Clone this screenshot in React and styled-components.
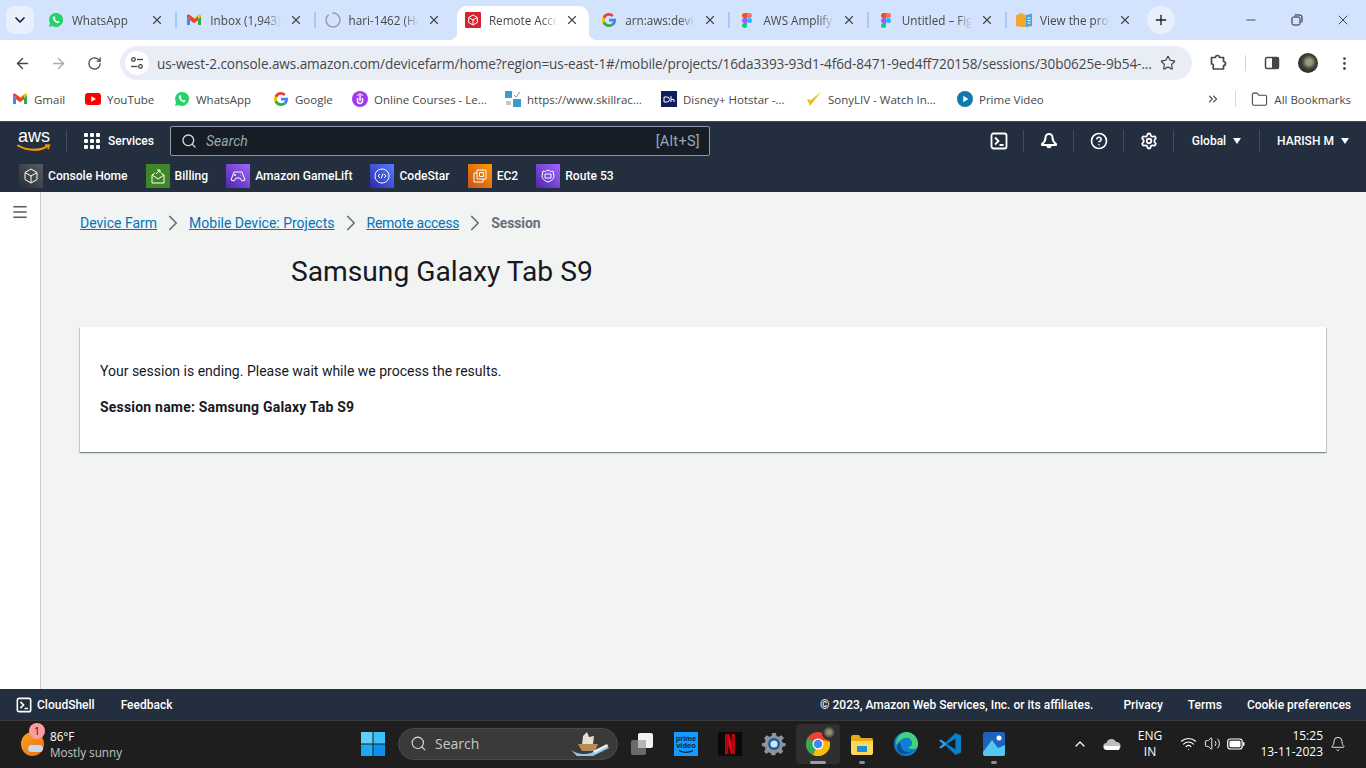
import styled, { createGlobalStyle } from "styled-components";
import {
  Search as SearchIcon,
  X,
  Plus,
  ArrowLeft,
  ArrowRight,
  RotateCw,
  Star,
  Minus,
  ChevronDown,
  ChevronUp,
  ChevronsRight,
  Folder,
  MoreVertical,
  Bell,
  CircleHelp,
  Settings,
  Menu,
  ChevronRight,
  Wifi,
  Volume2,
} from "lucide-react";

const GlobalStyle = createGlobalStyle`
  html, body { margin: 0; padding: 0; background: #fff; }
  body { font-family: "Open Sans", "Noto Sans", sans-serif; overflow: hidden; }
  * { box-sizing: border-box; }
`;

const Page = styled.div`
  width: 1366px;
  height: 768px;
  display: flex;
  flex-direction: column;
  overflow: hidden;
`;

/* ---------- chrome tabs ---------- */
const TabStrip = styled.div`
  height: 40px;
  flex: none;
  background: #d3e3fd;
  display: flex;
  align-items: flex-start;
  padding: 6px 0 0 6px;
`;
const TabMenu = styled.div`
  width: 28px;
  height: 28px;
  margin-right: 4px;
  border-radius: 8px;
  background: #e8f0fe;
  display: flex;
  align-items: center;
  justify-content: center;
  color: #1f1f1f;
`;
const Tab = styled.div`
  position: relative;
  width: ${(p) => (p.$active ? "132.3px" : "138.3px")};
  margin: ${(p) => (p.$active ? "0 2px 0 4px" : "0")};
  height: 34px;
  display: flex;
  align-items: center;
  padding: ${(p) => (p.$active ? "0 10px 6px 8px" : "0 12px 6px 10px")};
  gap: 8px;
  font-size: 11.7px;
  color: #474747;
  border-radius: 10px 10px 0 0;
  background: ${(p) => (p.$active ? "#fff" : "transparent")};
  &::before {
    content: "";
    display: ${(p) => (p.$sep ? "block" : "none")};
    position: absolute;
    left: -1px;
    top: 6px;
    width: 2px;
    height: 16px;
    background: #a8c7fa;
  }
`;
/* small flares where the active tab runs into the toolbar */
const TabFlare = styled.span`
  position: absolute;
  bottom: 0;
  width: 8px;
  height: 8px;
  ${(p) => (p.$right ? "right: -8px;" : "left: -8px;")}
  background: radial-gradient(
    circle at ${(p) => (p.$right ? "100% 0" : "0 0")},
    transparent 8px,
    #fff 8.5px
  );
`;
const TabIcon = styled.div`
  width: 16px;
  height: 16px;
  flex: none;
  display: flex;
`;
const TabTitle = styled.div`
  flex: 1;
  white-space: nowrap;
  overflow: hidden;
  -webkit-mask-image: linear-gradient(90deg, #000 78%, transparent 100%);
  mask-image: linear-gradient(90deg, #000 78%, transparent 100%);
`;
const NewTab = styled.div`
  width: 28px;
  height: 28px;
  margin-left: 3px;
  border-radius: 50%;
  background: #e8f0fe;
  display: flex;
  align-items: center;
  justify-content: center;
  color: #1f1f1f;
`;
const WindowControls = styled.div`
  margin-left: auto;
  display: flex;
  margin-top: -6px;
`;
const WindowButton = styled.div`
  width: 46px;
  height: 40px;
  display: flex;
  align-items: center;
  justify-content: center;
  color: #1f1f1f;
`;

/* ---------- address bar ---------- */
const Toolbar = styled.div`
  height: 45px;
  flex: none;
  background: #fff;
  border-radius: 8px 8px 0 0;
  display: flex;
  align-items: center;
  padding: 1px 0 0 4px;
  color: #474747;
`;
const NavButton = styled.div`
  width: 36px;
  height: 34px;
  display: flex;
  align-items: center;
  justify-content: center;
  color: ${(p) => (p.$off ? "#a9abad" : "#474747")};
`;
const AddressBar = styled.div`
  width: 1072px;
  height: 34px;
  margin-left: 8px;
  border-radius: 17px;
  background: #e9eef6;
  display: flex;
  align-items: center;
  padding: 0 16px 0 5px;
`;
const SiteChip = styled.div`
  width: 24px;
  height: 24px;
  border-radius: 50%;
  background: #fff;
  display: flex;
  align-items: center;
  justify-content: center;
  margin-right: 8px;
`;
const Url = styled.div`
  flex: 1;
  font-size: 13.6px;
  color: #474747;
  letter-spacing: -0.1px;
  white-space: nowrap;
`;
const ToolRight = styled.div`
  display: flex;
  align-items: center;
  margin-left: 8px;
`;
const ToolSlot = styled.div`
  width: 36px;
  display: flex;
  align-items: center;
  justify-content: center;
`;
const ToolSep = styled.div`
  width: 1px;
  height: 16px;
  background: #c7d7f0;
  margin: 0 ${(p) => p.$m || 8}px;
`;
const Avatar = styled.div`
  width: 20px;
  height: 20px;
  border-radius: 50%;
  background: radial-gradient(circle at 55% 45%, #9b9a80 0 18%, #3c3f33 45%, #171d1c 100%);
`;

/* ---------- bookmarks ---------- */
const Bookmarks = styled.div`
  height: 36px;
  flex: none;
  background: #fff;
  display: flex;
  align-items: center;
  padding: 0 15px 8px 12px;
  font-size: 11.5px;
  color: #474747;
`;
const Bookmark = styled.div`
  display: flex;
  align-items: center;
  gap: 6px;
  width: ${(p) => (p.$w ? `${p.$w}px` : "auto")};
  white-space: nowrap;
`;
const BookmarkEnd = styled.div`
  margin-left: auto;
  display: flex;
  align-items: center;
`;

/* ---------- aws nav ---------- */
const AwsNav = styled.div`
  height: 71px;
  flex: none;
  background: #232f3e;
  color: #fff;
  border-top: 1px solid #414750;
  font-family: "Roboto", "Open Sans", sans-serif;
`;
const AwsTop = styled.div`
  height: 37px;
  display: flex;
  align-items: center;
  padding: 1px 0 0 17px;
`;
const AwsLogo = styled.div`
  width: 40px;
  height: 28px;
`;
const AwsDivider = styled.div`
  width: 1px;
  height: 22px;
  background: #414d5c;
  margin: ${(p) => p.$m || "0"};
`;
const ServicesBtn = styled.div`
  display: flex;
  align-items: center;
  gap: 8px;
  font-size: 12px;
  font-weight: 500;
  width: 86px;
`;
const GridDots = styled.div`
  width: 16px;
  height: 16px;
  display: grid;
  grid-template-columns: repeat(3, 4px);
  grid-auto-rows: 4px;
  gap: 2px;
  & > i {
    background: #fff;
    border-radius: 1px;
  }
`;
const AwsSearch = styled.div`
  width: 540px;
  height: 30px;
  background: #161d26;
  border: 1px solid #8d99a8;
  border-radius: 2px;
  display: flex;
  align-items: center;
  padding: 0 9px 0 10px;
  gap: 9px;
  font-size: 14px;
`;
const SearchHint = styled.span`
  font-style: italic;
  color: #9ba7b6;
  flex: 1;
`;
const SearchKey = styled.span`
  color: #9ba7b6;
  font-size: 14.5px;
  letter-spacing: 0.3px;
`;
const AwsRight = styled.div`
  margin-left: auto;
  display: flex;
  align-items: center;
  height: 100%;
`;
const AwsIconBtn = styled.div`
  width: 49px;
  display: flex;
  align-items: center;
  justify-content: center;
`;
const AwsMenu = styled.div`
  width: ${(p) => p.$w}px;
  display: flex;
  align-items: center;
  justify-content: center;
  gap: 7px;
  font-size: 12px;
  font-weight: 500;
  white-space: nowrap;
`;
const Caret = styled.span`
  width: 0;
  height: 0;
  border-left: 4.5px solid transparent;
  border-right: 4.5px solid transparent;
  border-top: 6px solid #fff;
`;
const Favs = styled.div`
  height: 33px;
  display: flex;
  align-items: center;
  padding-left: 19px;
  gap: 18px;
  font-size: 12.1px;
  font-weight: 500;
`;
const Fav = styled.div`
  display: flex;
  align-items: center;
  gap: 5px;
  white-space: nowrap;
`;
const FavIcon = styled.div`
  width: 24px;
  height: 24px;
  background: ${(p) => p.$bg};
  display: flex;
  align-items: center;
  justify-content: center;
`;

/* ---------- main ---------- */
const Body = styled.div`
  flex: 1;
  display: flex;
  min-height: 0;
  background: #f2f3f3;
  font-family: "Roboto", "Open Sans", sans-serif;
`;
const SideRail = styled.div`
  width: 41px;
  background: #fff;
  border-right: 1px solid #c8cccc;
  padding: 11px 0 0 11px;
  color: #545b64;
`;
const Content = styled.div`
  flex: 1;
  padding: 21px 40px 0 39px;
`;
const Crumbs = styled.div`
  display: flex;
  align-items: center;
  height: 20px;
  font-size: 14px;
`;
const CrumbLink = styled.a`
  color: #0073bb;
  text-decoration: underline;
  letter-spacing: ${(p) => p.$ls || 0}px;
`;
const CrumbCurrent = styled.span`
  color: #687078;
  font-weight: 700;
  letter-spacing: -0.1px;
`;
const CrumbSep = styled.div`
  width: 32px;
  display: flex;
  justify-content: center;
  color: #687078;
`;
const Title = styled.h1`
  margin: 19px 0 0 211px;
  font-size: 28.2px;
  line-height: 40px;
  font-weight: 400;
  color: #16191f;
`;
const Card = styled.div`
  margin-top: 35px;
  height: 125px;
  background: #fff;
  padding: 34px 20px 0;
  font-size: 14px;
  color: #16191f;
  box-shadow: 0 1px 1px 0 rgba(0, 28, 36, 0.3), 1px 1px 1px 0 rgba(0, 28, 36, 0.15),
    -1px 1px 1px 0 rgba(0, 28, 36, 0.15);
`;
const CardText = styled.p`
  margin: 0 0 16px;
  line-height: 20px;
  font-weight: ${(p) => (p.$bold ? 700 : 400)};
  letter-spacing: ${(p) => (p.$bold ? "0.2px" : "0")};
`;

/* ---------- footer ---------- */
const Footer = styled.div`
  height: 31px;
  flex: none;
  background: #232f3e;
  color: #fff;
  display: flex;
  align-items: center;
  padding: 0 15px 0 16px;
  font-size: 12px;
  font-weight: 500;
  font-family: "Roboto", "Open Sans", sans-serif;
`;
const FootItem = styled.div`
  display: flex;
  align-items: center;
  gap: 5px;
  margin-right: ${(p) => p.$gap || 0}px;
  white-space: nowrap;
`;
const FootRight = styled.div`
  margin-left: auto;
  display: flex;
`;

/* ---------- taskbar ---------- */
const Taskbar = styled.div`
  height: 48px;
  flex: none;
  background: #1e1e1e;
  border-top: 1px solid #3a3a3a;
  color: #fff;
  display: flex;
  align-items: center;
  padding: 0 13px 2px 0;
  font-family: "Open Sans", "Noto Sans", sans-serif;
`;
const Weather = styled.div`
  width: 351px;
  display: flex;
  align-items: center;
  padding-left: 21px;
  gap: 6px;
`;
const WeatherIcon = styled.div`
  position: relative;
  width: 23px;
  height: 24px;
  border-radius: 50%;
  background: linear-gradient(135deg, #f6a623, #ea6c12);
`;
const WeatherBadge = styled.div`
  position: absolute;
  left: 8px;
  top: -9px;
  width: 16px;
  height: 16px;
  border-radius: 50%;
  background: #ff99a4;
  color: #1b1b1b;
  font-size: 11px;
  line-height: 16px;
  text-align: center;
`;
const WeatherCloud = styled.div`
  position: absolute;
  left: 7px;
  top: 13px;
  width: 15px;
  height: 7px;
  border-radius: 4px;
  background: #c9d8ec;
`;
const WeatherText = styled.div`
  font-size: 11.7px;
  line-height: 16px;
  color: #fff;
  & > small {
    display: block;
    font-size: 11.7px;
    color: #c5c5c5;
  }
`;
const TaskSlot = styled.div`
  position: relative;
  width: 44px;
  height: 40px;
  display: flex;
  align-items: center;
  justify-content: center;
  border-radius: 4px;
  background: ${(p) => (p.$active ? "#2f2f2f" : "transparent")};
  &::after {
    content: "";
    display: ${(p) => (p.$dot ? "block" : "none")};
    position: absolute;
    bottom: 0;
    left: 50%;
    transform: translateX(-50%);
    height: 3px;
    border-radius: 2px;
    width: ${(p) => (p.$active ? 16 : 6)}px;
    background: ${(p) => (p.$active ? "#9e9e9e" : "#8b8b8b")};
  }
`;
const TaskSearch = styled.div`
  width: 220px;
  height: 32px;
  margin: 0 2px 0 3px;
  border-radius: 16px;
  background: #3a3a3a;
  border: 1px solid #4a4a4a;
  display: flex;
  align-items: center;
  padding: 0 6px 0 11px;
  gap: 8px;
  font-size: 14px;
  color: #c8c8c8;
`;
const SearchArt = styled.div`
  margin-left: auto;
  width: 42px;
  height: 26px;
`;
const Tray = styled.div`
  margin-left: auto;
  display: flex;
  align-items: center;
  color: #fff;
`;
const TrayLang = styled.div`
  width: 52px;
  font-size: 12px;
  line-height: 16px;
  text-align: center;
`;
const TrayClock = styled.div`
  width: 75px;
  font-size: 12px;
  line-height: 16px;
  text-align: right;
  white-space: nowrap;
`;
const TrayItem = styled.div`
  width: ${(p) => p.$w || 24}px;
  display: flex;
  align-items: center;
  justify-content: center;
`;

/* ---------- drawings ---------- */
const WhatsApp = ({ size = 16 }) => (
  <svg width={size} height={size} viewBox="0 0 16 16">
    <path d="M1 15l1-3.7A7 7 0 1 1 4.7 14z" fill="#25d366" />
    <path d="M5.6 4.3c-.9.6-1 1.7-.5 2.9.7 1.6 2 3 3.7 3.7 1 .4 2 .3 2.5-.5.3-.4.3-.8.2-.9L10 8.7l-.8.8c-.9-.4-1.800-1.300-2.300-2.300l.7-.8-.8-2z" fill="#fff" />
  </svg>
);
const Gmail = () => (
  <svg width="16" height="16" viewBox="0 0 16 16">
    <path d="M1 4v9h3V7z" fill="#4285f4" />
    <path d="M15 4v9h-3V7z" fill="#34a853" />
    <path d="M1 3.8C1 2.5 2.5 2 3.4 2.7L8 6.2l-.1 3L1 4.500z" fill="#ea4335" />
    <path d="M15 3.8c0-1.300-1.500-1.800-2.400-1.100L8 6.200v3l7-4.700z" fill="#fbbc04" />
    <path d="M4 4.500L8 7.600l4-3.100v3.800L8 11.200 4 8.300z" fill="#ea4335" />
  </svg>
);
const GoogleG = () => (
  <svg width="16" height="16" viewBox="0 0 16 16">
    <path d="M15 8.200c0-.5 0-1-.1-1.400H8v2.700h4a3.400 3.400 0 0 1-1.500 2.200l2.300 1.800C14.200 12.200 15 10.400 15 8.200z" fill="#4285f4" />
    <path d="M8 15c1.900 0 3.500-.6 4.700-1.700l-2.300-1.800c-.6.4-1.400.7-2.400.7-1.800 0-3.400-1.200-3.900-2.900H1.700v1.900A7 7 0 0 0 8 15z" fill="#34a853" />
    <path d="M4.100 9.300a4.200 4.200 0 0 1 0-2.600V4.800H1.700a7 7 0 0 0 0 6.400z" fill="#fbbc04" />
    <path d="M8 3.800c1 0 2 .4 2.700 1.100l2-2A7 7 0 0 0 1.700 4.800l2.400 1.900C4.600 5 6.200 3.800 8 3.800z" fill="#ea4335" />
  </svg>
);
const Figma = () => (
  <svg width="16" height="16" viewBox="0 0 16 16">
    <path d="M8 1H5.500a2.500 2.500 0 0 0 0 5H8z" fill="#f24e1e" />
    <path d="M8 1h2.500a2.500 2.500 0 0 1 0 5H8z" fill="#ff7262" />
    <path d="M8 6H5.500a2.500 2.500 0 0 0 0 5H8z" fill="#a259ff" />
    <circle cx="10.500" cy="8.500" r="2.500" fill="#1abcfe" />
    <path d="M8 11H5.500A2.500 2.500 0 1 0 8 13.500z" fill="#0acf83" />
  </svg>
);
const GitHubRing = () => (
  <svg width="16" height="16" viewBox="0 0 16 16" fill="none">
    <circle cx="8" cy="8" r="7" stroke="#9aa0a6" strokeWidth="1.500" strokeDasharray="28 4" />
  </svg>
);
const RedCube = () => (
  <svg width="16" height="16" viewBox="0 0 16 16">
    <rect width="16" height="16" rx="1" fill="#d6232f" />
    <path d="M8 3l4.300 2.500v5L8 13l-4.300-2.500v-5zM3.700 5.500L8 8l4.300-2.500M8 8v5" fill="none" stroke="#fff" strokeWidth="1" />
  </svg>
);
const BoxIcon = () => (
  <svg width="16" height="16" viewBox="0 0 16 16">
    <path d="M0 3.500L5 1l5 2v12l-5 0-5-1z" fill="#f2a72e" />
    <path d="M10 3l6-1.500V14l-6 1z" fill="#4aa3df" />
    <path d="M11.500 6h3M11.500 8.500h3M11.500 11h3" stroke="#fff" />
  </svg>
);
const YouTube = () => (
  <svg width="16" height="12" viewBox="0 0 16 12">
    <rect width="16" height="12" rx="3" fill="#f00" />
    <path d="M6.300 3.300L11 6 6.300 8.700z" fill="#fff" />
  </svg>
);
const OnlineCourses = () => (
  <svg width="16" height="16" viewBox="0 0 16 16">
    <circle cx="8" cy="8" r="8" fill="#a435f0" />
    <path d="M5.500 7v3a2.500 2.500 0 0 0 5 0V7" stroke="#fff" strokeWidth="1.500" fill="none" />
    <path d="M8 4v6" stroke="#fff" strokeWidth="1.500" />
    <path d="M5 4.500L8 2.800l3 1.700" stroke="#fff" fill="none" />
  </svg>
);
const SkillRack = () => (
  <svg width="16" height="16" viewBox="0 0 16 16">
    <rect x="0" y="0" width="7" height="7" fill="#3d9bd4" />
    <rect x="8" y="8" width="8" height="8" fill="#3d9bd4" />
    <path d="M9 4l2 2 4-5" stroke="#8a8f94" strokeWidth="1" fill="none" />
    <path d="M1 11h5M1 13h5" stroke="#8a8f94" />
  </svg>
);
const Hotstar = () => (
  <svg width="16" height="16" viewBox="0 0 16 16">
    <rect width="16" height="16" fill="#0f1f5c" />
    <path d="M3 6h3a2 2 0 0 1 0 5H3zM10 5v6M10 8.500h3V11" stroke="#fff" strokeWidth="1" fill="none" />
  </svg>
);
const SonyLiv = () => (
  <svg width="16" height="16" viewBox="0 0 16 16">
    <path d="M1 8l3 7L15 1 5 9z" fill="#f5b81f" />
  </svg>
);
const PrimeVideo = () => (
  <svg width="16" height="16" viewBox="0 0 16 16">
    <circle cx="8" cy="8" r="8" fill="#0f79af" />
    <path d="M6.300 4.800l5 3.200-5 3.200z" fill="#fff" />
  </svg>
);
const Tune = () => (
  <svg width="14" height="14" viewBox="0 0 14 14" fill="none" stroke="#474747" strokeWidth="1.300">
    <circle cx="3.500" cy="3.500" r="1.800" />
    <path d="M7 3.500h6" />
    <circle cx="10.500" cy="10.500" r="1.800" />
    <path d="M1 10.500h6.500" />
  </svg>
);
const Restore = () => (
  <svg width="12" height="12" viewBox="0 0 12 12" fill="none" stroke="#1f1f1f">
    <rect x="1" y="3" width="8" height="8" rx="1.500" />
    <path d="M3.500 1h5.500A2 2 0 0 1 11 3v5.500" />
  </svg>
);
const Extensions = () => (
  <svg width="18" height="18" viewBox="0 0 18 18" fill="none" stroke="#474747" strokeWidth="1.700" strokeLinejoin="round">
    <path d="M2.500 3.500h4a2 2 0 0 1 4 0h4v4a2 2 0 0 1 0 4v3.500h-10l-.5-2a1.800 1.800 0 0 0-1.500-3z" />
  </svg>
);
const SidePanel = () => (
  <svg width="16" height="16" viewBox="0 0 16 16">
    <rect x="1.500" y="2.500" width="13" height="11" rx="1.500" fill="none" stroke="#474747" strokeWidth="1.500" />
    <rect x="8" y="2.500" width="6.500" height="11" fill="#474747" />
  </svg>
);
const AwsMark = () => (
  <svg width="38" height="28" viewBox="0 0 38 28">
    <text x="1" y="15" fontFamily="Liberation Sans, sans-serif" fontSize="18" fill="#fff">
      aws
    </text>
    <path d="M1 18.500c9 5.500 22 5.500 29 .8" stroke="#f90" strokeWidth="2" fill="none" strokeLinecap="round" />
    <path d="M28 18l4.500.3-1.500 4" stroke="#f90" strokeWidth="1.500" fill="none" />
  </svg>
);
const Terminal = ({ size = 18 }) => (
  <svg width={size} height={size} viewBox="0 0 18 18" fill="none" stroke="#fff" strokeWidth="1.800">
    <rect x="1.500" y="1.500" width="15" height="15" rx="2" />
    <path d="M5 5.500L8.500 9 5 12.500M9.500 13h4" />
  </svg>
);
const AwsBell = () => (
  <svg width="18" height="18" viewBox="0 0 18 18" fill="none" stroke="#fff" strokeWidth="2" strokeLinejoin="round">
    <path d="M9 2a3.500 3.500 0 0 1 3.500 3.500c0 3 1.500 5 3.500 6.500v1H2v-1c2-1.500 3.500-3.500 3.500-6.500A3.500 3.500 0 0 1 9 2z" />
    <path d="M7.200 14a1.900 1.900 0 0 0 3.600 0" />
  </svg>
);
const FavGlyph = ({ d }) => (
  <svg width="18" height="18" viewBox="0 0 18 18" fill="none" stroke="#fff" strokeWidth="1">
    <path d={d} />
  </svg>
);
const Win11 = () => (
  <svg width="24" height="24" viewBox="0 0 24 24">
    <rect width="11.500" height="11.500" fill="#5fd0fb" />
    <rect x="12.500" width="11.500" height="11.500" fill="#3cc0fa" />
    <rect y="12.500" width="11.500" height="11.500" fill="#1fa8f4" />
    <rect x="12.500" y="12.500" width="11.500" height="11.500" fill="#0f90ec" />
  </svg>
);
const TaskView = () => (
  <svg width="24" height="24" viewBox="0 0 24 24">
    <rect x="1" y="8" width="15" height="15" rx="2" fill="#6b6b6b" />
    <rect x="8" y="1" width="15" height="15" rx="2" fill="#f2f2f2" />
    <rect x="8" y="8" width="8" height="8" fill="#b5b5b5" />
  </svg>
);
const PrimeApp = () => (
  <svg width="24" height="24" viewBox="0 0 24 24">
    <rect width="24" height="24" fill="#1399ff" />
    <text x="12" y="9" textAnchor="middle" fontFamily="Liberation Sans, sans-serif" fontSize="7.500" fontWeight="700" fill="#10233a">
      prime
    </text>
    <text x="12" y="15.500" textAnchor="middle" fontFamily="Liberation Sans, sans-serif" fontSize="7.500" fontWeight="700" fill="#10233a">
      video
    </text>
    <path d="M5 18.500c4 2.500 10 2.500 14 0" stroke="#10233a" strokeWidth="1.300" fill="none" />
  </svg>
);
const Netflix = () => (
  <svg width="24" height="24" viewBox="0 0 24 24">
    <rect width="24" height="24" fill="#0a0a0a" />
    <path d="M7 2h4l6 20h-4z" fill="#e50914" />
    <path d="M7 2h3.500v20L7 22.500zM13.500 2H17v20.500l-3.500-.5z" fill="#b1060f" />
  </svg>
);
const GearApp = () => (
  <svg width="26" height="26" viewBox="0 0 24 24">
    <path d="M10 1h4l.6 3 2.400 1 2.600-1.700 2.800 2.800L20 8.700l1 2.400 3 .6v3l-3 .6-1 2.400 1.700 2.400-2.800 2.800-2.600-1.700-2.400 1-.6 2h-4l-.6-2-2.400-1-2.600 1.700L1.500 20.100l1.700-2.400-1-2.400-3-.6v-3l3-.6 1-2.400L1.500 6.100l2.800-2.800L6.900 5l2.400-1z" fill="#8e949b" transform="translate(1.500 1) scale(.88)" />
    <circle cx="12" cy="12" r="5.500" fill="#0f5fa8" />
    <circle cx="12" cy="12" r="3.300" fill="#d8e2ec" />
  </svg>
);
const ChromeApp = () => (
  <svg width="24" height="24" viewBox="0 0 24 24">
    <circle cx="12" cy="12" r="12" fill="#ea4335" />
    <path d="M12 12L1.600 6a12 12 0 0 0 5.400 17z" fill="#34a853" />
    <path d="M12 12l-5 11A12 12 0 0 0 23.800 10L12 7z" fill="#fbbc04" />
    <circle cx="12" cy="12" r="5.500" fill="#fff" />
    <circle cx="12" cy="12" r="4.300" fill="#4285f4" />
  </svg>
);
const ChromeSlot = styled.div`
  position: relative;
  display: flex;
`;
const ChromeAvatar = styled.div`
  position: absolute;
  right: -6px;
  top: -6px;
  width: 14px;
  height: 14px;
  border-radius: 50%;
  background: radial-gradient(circle at 50% 45%, #8f8f78 0 20%, #2c2f28 60%, #171d1c 100%);
`;
const FolderApp = () => (
  <svg width="24" height="24" viewBox="0 0 24 24">
    <path d="M1 5a2 2 0 0 1 2-2h6l2 3h10a2 2 0 0 1 2 2v2H1z" fill="#e8a917" />
    <path d="M1 9h22v12a2 2 0 0 1-2 2H3a2 2 0 0 1-2-2z" fill="#ffd65c" />
    <rect x="7" y="14" width="10" height="6" fill="#1a8fdd" />
  </svg>
);
const EdgeApp = () => (
  <svg width="24" height="24" viewBox="0 0 24 24">
    <circle cx="12" cy="12" r="12" fill="#0f7fcf" />
    <path d="M12 0a12 12 0 0 1 12 13c0 3-3 4-6 4-2 0-4-1-4-2 2 0 4-1 4-4 0-4-4-6-7-5-4 1-7 4-9 7A12 12 0 0 1 12 0z" fill="#45d17c" />
    <path d="M7 13c0 4 3 7 7 7 2 0 4-.5 6-2a12 12 0 0 1-14 3C3 19 2 15 4 12c1-1 3-1 3 1z" fill="#0a4f9e" />
  </svg>
);
const VSCodeApp = () => (
  <svg width="24" height="24" viewBox="0 0 24 24">
    <path d="M17.500 1L23 3.500v17L17.500 23 6 12z" fill="#0a7ecb" />
    <path d="M17.500 6.500v11L9 12z" fill="#1e1e1e" />
    <path d="M1 8.500l2-1 5 3.500-1 1 1 1-5 3.500-2-1L5 12z" fill="#2ba0ea" />
  </svg>
);
const PhotosApp = () => (
  <svg width="24" height="24" viewBox="0 0 24 24">
    <rect x="1" width="22" height="24" rx="2" fill="#1c62bf" />
    <circle cx="17" cy="6" r="2.500" fill="#fff" />
    <path d="M1 20l9-12 6 8 7-3v9a2 2 0 0 1-2 2H3a2 2 0 0 1-2-2z" fill="#53c6f2" />
  </svg>
);
const ShipArt = () => (
  <svg width="42" height="26" viewBox="0 0 42 26">
    <path d="M14 5l4-4 2 5 5-1-1 8-11 1z" fill="#e6e0d0" />
    <path d="M9 13h20l-3 7H13z" fill="#b98a5a" />
    <path d="M2 19c6 4 12 5 20 3l16-8 2 3-16 8H8z" fill="#8bcde8" />
    <path d="M24 20l14-7 1 2-13 7z" fill="#f0f0f0" />
  </svg>
);
const OneDrive = () => (
  <svg width="18" height="12" viewBox="0 0 18 12">
    <path d="M4 12a3.500 3.500 0 0 1-.5-7A5 5 0 0 1 13 4a4 4 0 0 1 1 8z" fill="#bdbdbd" />
    <path d="M1 8h16l-1 4H4a3.500 3.500 0 0 1-3-4z" fill="#fff" />
  </svg>
);
const Battery = () => (
  <svg width="18" height="12" viewBox="0 0 18 12">
    <rect x=".7" y="1" width="14.500" height="10" rx="2.500" fill="none" stroke="#fff" strokeWidth="1.200" />
    <rect x="2.500" y="2.800" width="11" height="6.400" rx="1" fill="#fff" />
    <rect x="16" y="4" width="1.500" height="4" rx=".7" fill="#fff" />
  </svg>
);

const tabs = [
  { title: "WhatsApp", icon: <WhatsApp /> },
  { title: "Inbox (1,943)", icon: <Gmail />, sep: true },
  { title: "hari-1462 (Hari)", icon: <GitHubRing />, sep: true },
  { title: "Remote Access", icon: <RedCube />, active: true },
  { title: "arn:aws:devicefarm", icon: <GoogleG /> },
  { title: "AWS Amplify", icon: <Figma />, sep: true },
  { title: "Untitled – Figma", icon: <Figma />, sep: true },
  { title: "View the project", icon: <BoxIcon />, sep: true },
];

const bookmarks = [
  { label: "Gmail", icon: <Gmail />, w: 73 },
  { label: "YouTube", icon: <YouTube />, w: 89 },
  { label: "WhatsApp", icon: <WhatsApp />, w: 99 },
  { label: "Google", icon: <GoogleG />, w: 79 },
  { label: "Online Courses - Le...", icon: <OnlineCourses />, w: 153 },
  { label: "https://www.skillrac...", icon: <SkillRack />, w: 156 },
  { label: "Disney+ Hotstar -...", icon: <Hotstar />, w: 145 },
  { label: "SonyLIV - Watch In...", icon: <SonyLiv />, w: 151 },
  { label: "Prime Video", icon: <PrimeVideo /> },
];

const favourites = [
  { label: "Console Home", bg: "linear-gradient(45deg,#2a2f35,#565b61)", d: "M9 2l6 3.500v7L9 16l-6-3.500v-7zM3 5.500L9 9l6-3.500M9 9v7" },
  { label: "Billing", bg: "#3f8624", d: "M3 8l6 4 6-4v8H3zM3 8l3-2M15 8l-3-2M7 7l4-4M8 3h3v3" },
  { label: "Amazon GameLift", bg: "linear-gradient(45deg,#4d27a8,#a166ff)", d: "M5 5h8l3 8-3 1-2-3H7l-2 3-3-1zM5 8h2M6 7v2M11.500 8h.5" },
  { label: "CodeStar", bg: "linear-gradient(45deg,#2e27ad,#527fff)", d: "M9 2a7 7 0 1 0 .01 0zM7 7L5 9l2 2M11 7l2 2-2 2M10 6.500L8 11.500" },
  { label: "EC2", bg: "linear-gradient(45deg,#c8511b,#ff9900)", d: "M6 3h9v9H6zM3 6h3M3 6v9h9v-3M8.500 5.500h4v4h-4z" },
  { label: "Route 53", bg: "linear-gradient(45deg,#4d27a8,#a166ff)", d: "M4 4c2 1 3 0 5-1 2 1 3 2 5 1l1 5c0 3-3 5-6 6-3-1-6-3-6-6zM6 7h6v4H6z" },
];

const App = () => (
  <Page>
    <GlobalStyle />
    <TabStrip>
      <TabMenu>
        <ChevronDown size={16} strokeWidth={2.500} />
      </TabMenu>
      {tabs.map((t) => (
        <Tab key={t.title} $active={t.active} $sep={t.sep}>
          {t.active && <TabFlare />}
          {t.active && <TabFlare $right />}
          <TabIcon>{t.icon}</TabIcon>
          <TabTitle>{t.title}</TabTitle>
          <X size={14} strokeWidth={2} color="#474747" />
        </Tab>
      ))}
      <NewTab>
        <Plus size={16} strokeWidth={2} />
      </NewTab>
      <WindowControls>
        <WindowButton>
          <Minus size={14} strokeWidth={1.300} />
        </WindowButton>
        <WindowButton>
          <Restore />
        </WindowButton>
        <WindowButton>
          <X size={16} strokeWidth={1.200} />
        </WindowButton>
      </WindowControls>
    </TabStrip>

    <Toolbar>
      <NavButton>
        <ArrowLeft size={17} strokeWidth={2} />
      </NavButton>
      <NavButton $off>
        <ArrowRight size={17} strokeWidth={2} />
      </NavButton>
      <NavButton>
        <RotateCw size={15} strokeWidth={2} />
      </NavButton>
      <AddressBar>
        <SiteChip>
          <Tune />
        </SiteChip>
        <Url>us-west-2.console.aws.amazon.com/devicefarm/home?region=us-east-1#/mobile/projects/16da3393-93d1-4f6d-8471-9ed4ff720158/sessions/30b0625e-9b54-...</Url>
        <Star size={16} strokeWidth={1.800} color="#474747" />
      </AddressBar>
      <ToolRight>
        <ToolSlot>
          <Extensions />
        </ToolSlot>
        <ToolSep $m={8.500} />
        <ToolSlot>
          <SidePanel />
        </ToolSlot>
        <ToolSlot>
          <Avatar />
        </ToolSlot>
        <ToolSlot>
          <MoreVertical size={17} strokeWidth={2} />
        </ToolSlot>
      </ToolRight>
    </Toolbar>

    <Bookmarks>
      {bookmarks.map((b) => (
        <Bookmark key={b.label} $w={b.w}>
          {b.icon}
          {b.label}
        </Bookmark>
      ))}
      <BookmarkEnd>
        <ChevronsRight size={14} strokeWidth={2} />
        <ToolSep $m={15} />
        <Bookmark>
          <Folder size={17} strokeWidth={1.500} />
          All Bookmarks
        </Bookmark>
      </BookmarkEnd>
    </Bookmarks>

    <AwsNav>
      <AwsTop>
        <AwsLogo>
          <AwsMark />
        </AwsLogo>
        <AwsDivider $m="0 17px 0 9px" />
        <ServicesBtn>
          <GridDots>
            {Array.from({ length: 9 }).map((_, i) => (
              <i key={i} />
            ))}
          </GridDots>
          Services
        </ServicesBtn>
        <AwsSearch>
          <SearchIcon size={16} strokeWidth={2} color="#d5dbdb" />
          <SearchHint>Search</SearchHint>
          <SearchKey>[Alt+S]</SearchKey>
        </AwsSearch>
        <AwsRight>
          <AwsIconBtn>
            <Terminal />
          </AwsIconBtn>
          <AwsDivider />
          <AwsIconBtn>
            <AwsBell />
          </AwsIconBtn>
          <AwsDivider />
          <AwsIconBtn>
            <CircleHelp size={18} strokeWidth={2.200} />
          </AwsIconBtn>
          <AwsDivider />
          <AwsIconBtn>
            <Settings size={18} strokeWidth={2.400} />
          </AwsIconBtn>
          <AwsDivider />
          <AwsMenu $w={85}>
            Global <Caret />
          </AwsMenu>
          <AwsDivider />
          <AwsMenu $w={106}>
            HARISH M <Caret />
          </AwsMenu>
        </AwsRight>
      </AwsTop>
      <Favs>
        {favourites.map((f) => (
          <Fav key={f.label}>
            <FavIcon $bg={f.bg}>
              <FavGlyph d={f.d} />
            </FavIcon>
            {f.label}
          </Fav>
        ))}
      </Favs>
    </AwsNav>

    <Body>
      <SideRail>
        <Menu size={18} strokeWidth={2.200} />
      </SideRail>
      <Content>
        <Crumbs>
          <CrumbLink>Device Farm</CrumbLink>
          <CrumbSep>
            <ChevronRight size={26} strokeWidth={1.600} />
          </CrumbSep>
          <CrumbLink>Mobile Device: Projects</CrumbLink>
          <CrumbSep>
            <ChevronRight size={26} strokeWidth={1.600} />
          </CrumbSep>
          <CrumbLink $ls={-0.25}>Remote access</CrumbLink>
          <CrumbSep>
            <ChevronRight size={26} strokeWidth={1.600} />
          </CrumbSep>
          <CrumbCurrent>Session</CrumbCurrent>
        </Crumbs>
        <Title>Samsung Galaxy Tab S9</Title>
        <Card>
          <CardText>Your session is ending. Please wait while we process the results.</CardText>
          <CardText $bold>Session name: Samsung Galaxy Tab S9</CardText>
        </Card>
      </Content>
    </Body>

    <Footer>
      <FootItem $gap={26}>
        <Terminal size={16} />
        CloudShell
      </FootItem>
      <FootItem>Feedback</FootItem>
      <FootRight>
        <FootItem $gap={30}>© 2023, Amazon Web Services, Inc. or its affiliates.</FootItem>
        <FootItem $gap={25}>Privacy</FootItem>
        <FootItem $gap={25}>Terms</FootItem>
        <FootItem>Cookie preferences</FootItem>
      </FootRight>
    </Footer>

    <Taskbar>
      <Weather>
        <WeatherIcon>
          <WeatherBadge>1</WeatherBadge>
          <WeatherCloud />
        </WeatherIcon>
        <WeatherText>
          86°F
          <small>Mostly sunny</small>
        </WeatherText>
      </Weather>
      <TaskSlot>
        <Win11 />
      </TaskSlot>
      <TaskSearch>
        <SearchIcon size={17} strokeWidth={1.500} color="#e0e0e0" />
        Search
        <SearchArt>
          <ShipArt />
        </SearchArt>
      </TaskSearch>
      <TaskSlot>
        <TaskView />
      </TaskSlot>
      <TaskSlot>
        <PrimeApp />
      </TaskSlot>
      <TaskSlot>
        <Netflix />
      </TaskSlot>
      <TaskSlot>
        <GearApp />
      </TaskSlot>
      <TaskSlot $active $dot>
        <ChromeSlot>
          <ChromeApp />
          <ChromeAvatar />
        </ChromeSlot>
      </TaskSlot>
      <TaskSlot $dot>
        <FolderApp />
      </TaskSlot>
      <TaskSlot>
        <EdgeApp />
      </TaskSlot>
      <TaskSlot>
        <VSCodeApp />
      </TaskSlot>
      <TaskSlot $dot>
        <PhotosApp />
      </TaskSlot>
      <Tray>
        <TrayItem $w={40}>
          <ChevronUp size={16} strokeWidth={1.800} />
        </TrayItem>
        <TrayItem>
          <OneDrive />
        </TrayItem>
        <TrayLang>
          ENG
          <br />
          IN
        </TrayLang>
        <TrayItem>
          <Wifi size={17} strokeWidth={1.500} />
        </TrayItem>
        <TrayItem>
          <Volume2 size={17} strokeWidth={1.300} color="#fff" />
        </TrayItem>
        <TrayItem>
          <Battery />
        </TrayItem>
        <TrayClock>
          15:25
          <br />
          13-11-2023
        </TrayClock>
        <TrayItem $w={30}>
          <Bell size={16} strokeWidth={1.300} />
        </TrayItem>
      </Tray>
    </Taskbar>
  </Page>
);

export default App;
